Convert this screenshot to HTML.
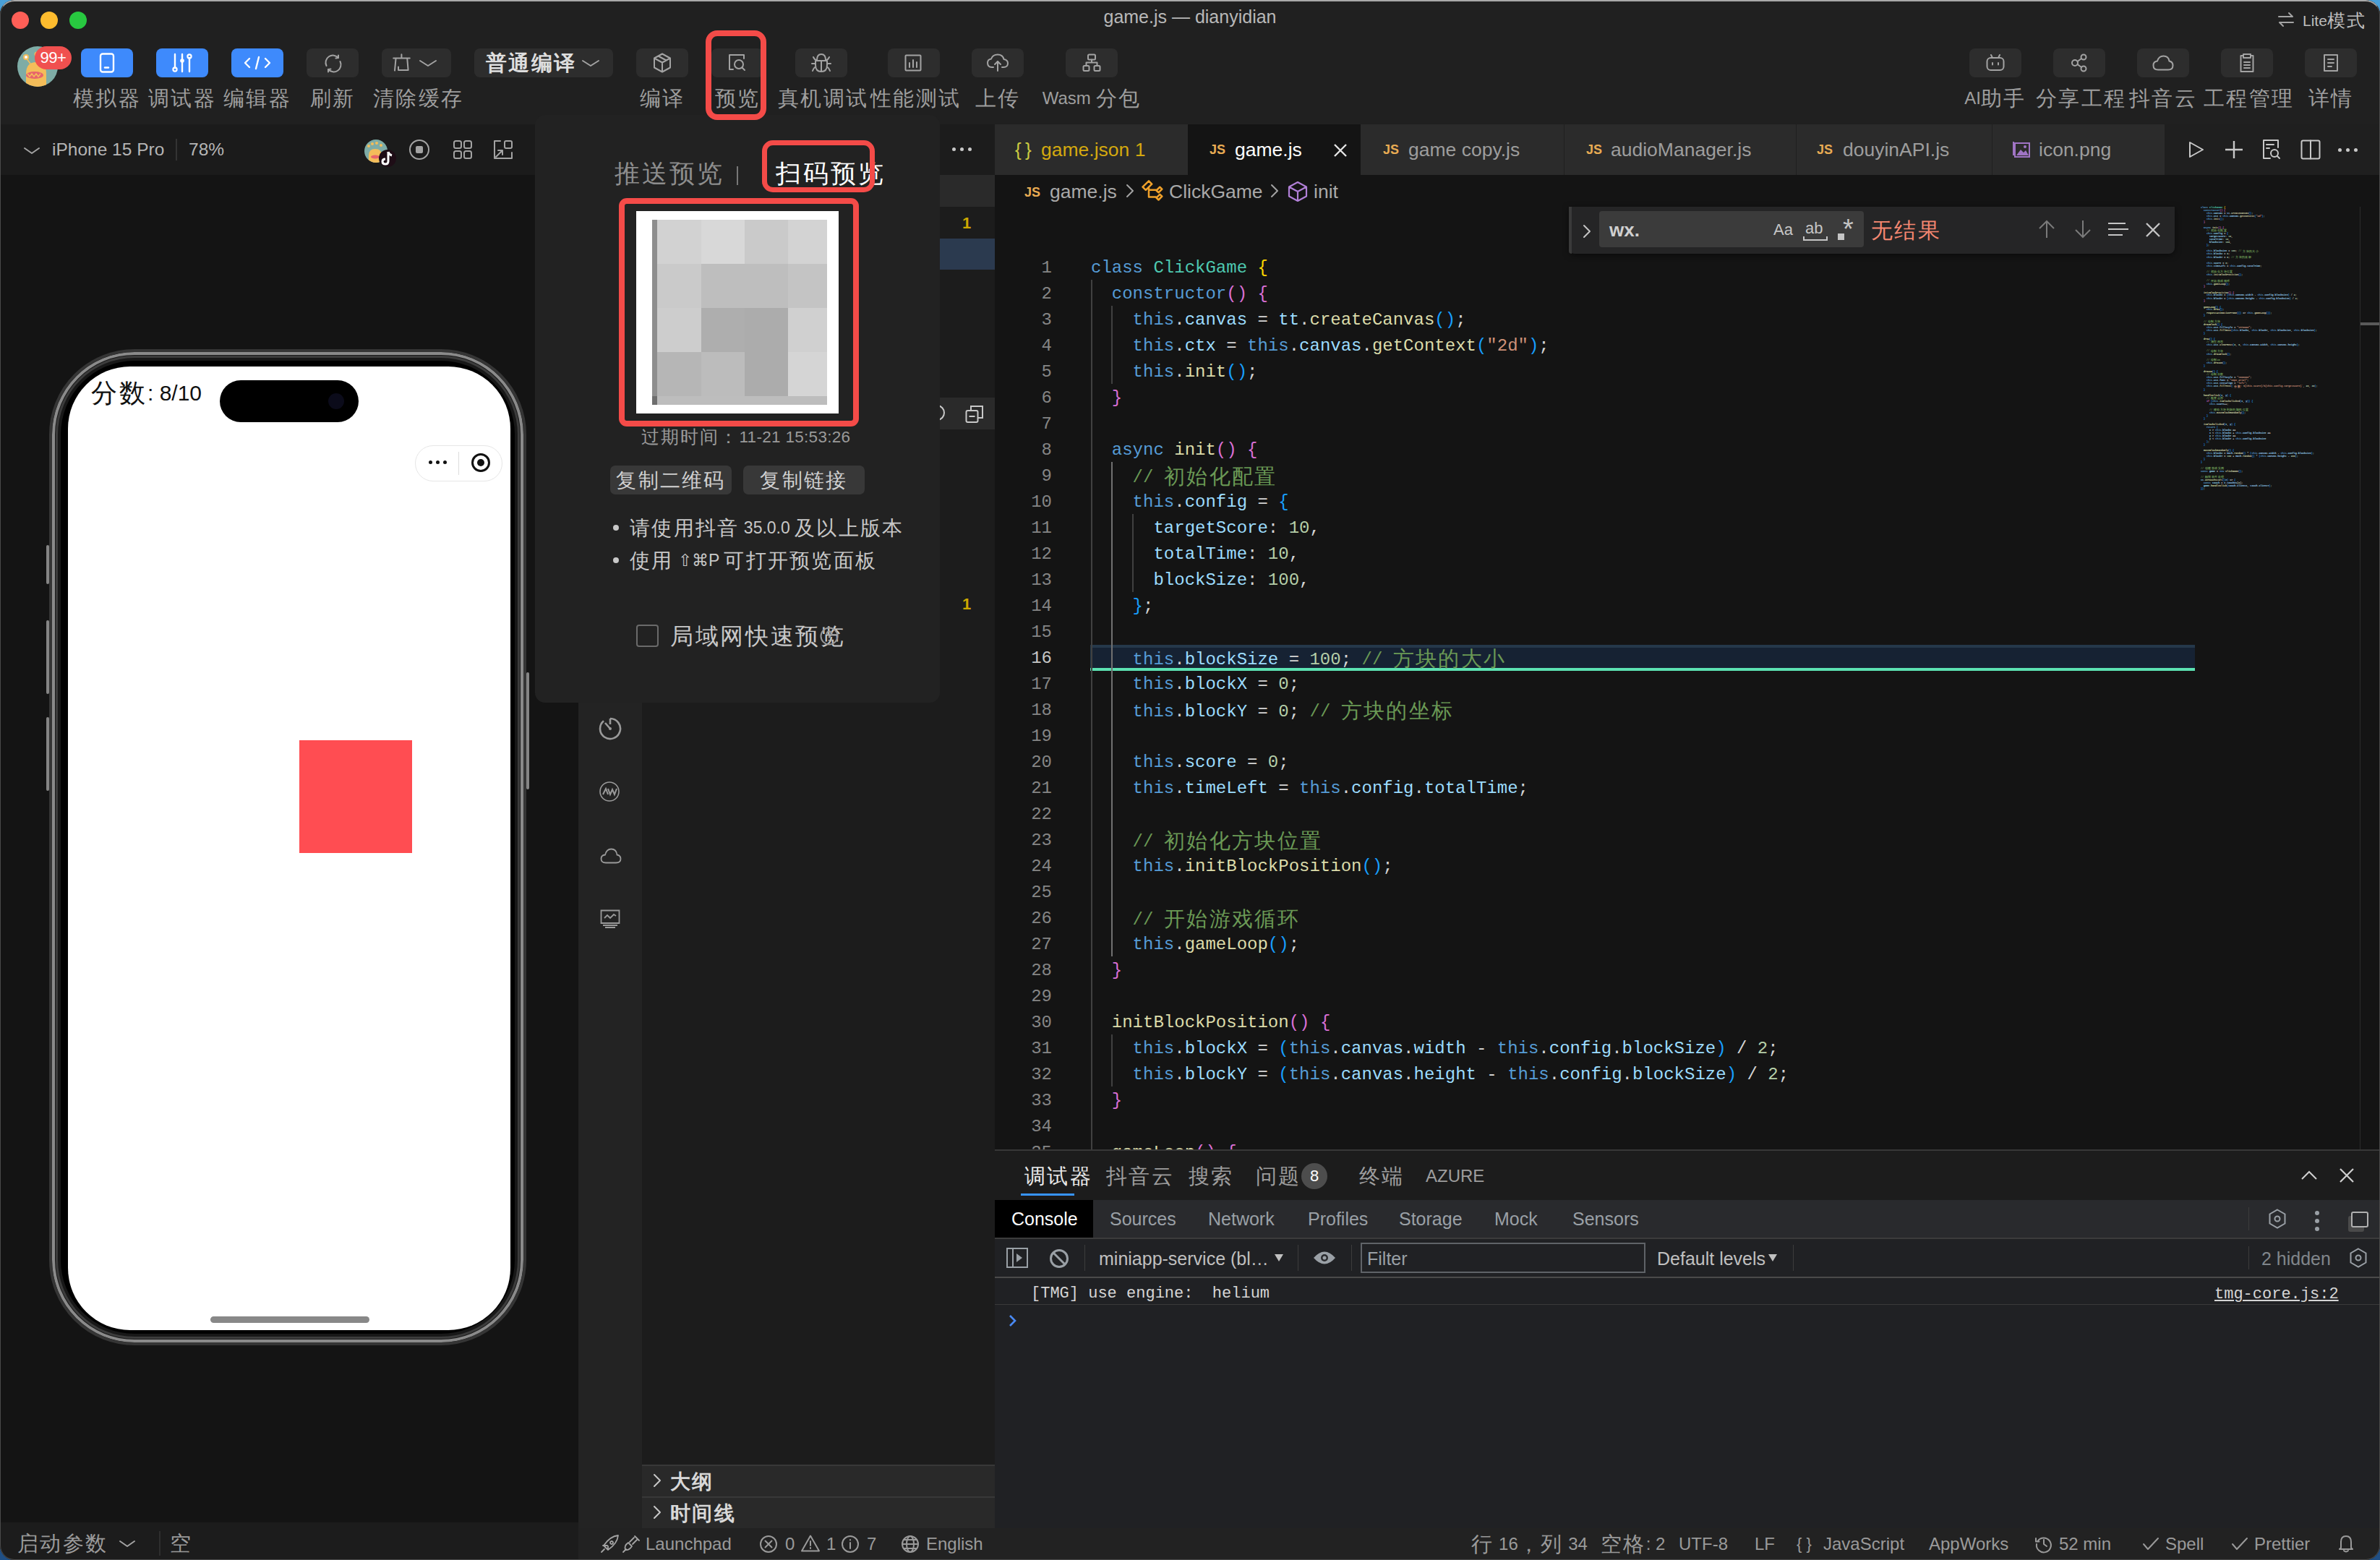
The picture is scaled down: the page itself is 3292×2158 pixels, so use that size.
<!DOCTYPE html>
<html><head><meta charset="utf-8">
<style>
*{margin:0;padding:0;box-sizing:border-box}
html,body{width:3292px;height:2158px;overflow:hidden;background:linear-gradient(#4aa0d8,#1f4f85);font-family:"Liberation Sans",sans-serif;color:#a8a8a8}
.a{position:absolute}
.mono{font-family:"Liberation Mono",monospace}
svg{position:absolute;overflow:visible}
/* toolbar */
.tb{position:absolute;top:67px;height:40px;border-radius:8px;background:#2d2d2d}
.tb.blue{background:#3e8afc}
.lbl{position:absolute;top:121px;font-size:24px;line-height:30px;color:#9e9e9e;text-align:center;white-space:nowrap}
.ic{stroke:#a3a3a3;stroke-width:2;fill:none;stroke-linecap:round;stroke-linejoin:round}
.icw{stroke:#fff;stroke-width:2.4;fill:none;stroke-linecap:round;stroke-linejoin:round}
/* code */
.code{position:absolute;left:1376px;top:351px;width:1660px;height:1240px;overflow:hidden}
.ln{position:absolute;left:0;width:79px;text-align:right;font-family:"Liberation Mono",monospace;font-size:24px;line-height:36px;color:#858585}
.cl{position:absolute;left:133px;font-family:"Liberation Mono",monospace;font-size:24px;line-height:36px;color:#d4d4d4;white-space:pre}
.k{color:#569cd6}.t{color:#4ec9b0}.y{color:#ffd700}.m{color:#da70d6}.b{color:#179fff}.v{color:#9cdcfe}.f{color:#dcdcaa}.s{color:#ce9178}.c{color:#6a9955}.n{color:#b5cea8}.w{color:#d4d4d4}
.guide{position:absolute;width:2px;background:#404040}
.z{font-size:1.2em;letter-spacing:.083em;vertical-align:-.06em;font-family:"Liberation Sans",sans-serif}
</style></head><body>
<div id="win" class="a" style="left:0;top:0;width:3292px;height:2158px;border-radius:20px;overflow:hidden;background:#202020">

<!-- ===== window chrome / toolbar ===== -->
<div class="a" style="left:0;top:0;width:3292px;height:172px;background:#202020"></div>
<div class="a" style="left:16px;top:16px;width:24px;height:24px;border-radius:50%;background:#fe5f57"></div>
<div class="a" style="left:56px;top:16px;width:24px;height:24px;border-radius:50%;background:#febc2e"></div>
<div class="a" style="left:96px;top:16px;width:24px;height:24px;border-radius:50%;background:#28c840"></div>
<div class="a" style="left:0;top:8px;width:3292px;text-align:center;font-size:25px;line-height:30px;color:#b8b8b8">game.js — dianyidian</div>

<!-- avatar -->
<svg style="left:24px;top:64px" width="56" height="56" viewBox="0 0 56 56">
<defs><clipPath id="av"><circle cx="28" cy="28" r="28"/></clipPath></defs>
<g clip-path="url(#av)"><rect width="56" height="56" fill="#7eaca6"/>
<path d="M12 56 L12 38 Q12 22 26 22 Q40 22 40 38 L40 56 Z" fill="#f4bd5a"/>
<ellipse cx="24" cy="40" rx="12" ry="5" fill="#e8656b"/>
<path d="M14 38 L17 42 L20 38 L23 42 L26 38 L29 42 L32 38" stroke="#f4bd5a" stroke-width="1.5" fill="none"/>
<line x1="18" y1="24" x2="12" y2="16" stroke="#f4bd5a" stroke-width="1.5"/><circle cx="12" cy="15" r="4" fill="#f4bd5a"/><circle cx="12" cy="15" r="2" fill="#fff"/>
<line x1="26" y1="22" x2="27" y2="12" stroke="#f4bd5a" stroke-width="1.5"/><circle cx="27" cy="11" r="3.5" fill="#f4bd5a"/><circle cx="27" cy="11" r="1.8" fill="#fff"/>
</g></svg>
<div class="a" style="left:48px;top:64px;width:51px;height:32px;border-radius:16px;background:#f0504f;color:#fff;font-size:22px;line-height:32px;text-align:center;letter-spacing:-0.5px">99+</div>

<div class="tb blue" style="left:112px;width:72px"></div>
<svg style="left:136px;top:73px" width="24" height="28" viewBox="0 0 24 28"><rect class="icw" x="3" y="1.5" width="18" height="25" rx="3"/><line class="icw" x1="9" y1="20.5" x2="14" y2="20.5"/></svg>
<div class="lbl" style="left:100px;width:96px"><span class="z">模拟器</span></div>

<div class="tb blue" style="left:216px;width:72px"></div>
<svg style="left:237px;top:74px" width="30" height="26" viewBox="0 0 30 26"><line class="icw" x1="5" y1="1" x2="5" y2="20"/><circle cx="5" cy="22" r="2.6" fill="none" stroke="#fff" stroke-width="2.2"/><line class="icw" x1="15" y1="1" x2="15" y2="25"/><circle cx="15" cy="10" r="2.8" fill="#fff"/><line class="icw" x1="25" y1="6" x2="25" y2="25"/><circle cx="25" cy="4" r="2.6" fill="none" stroke="#fff" stroke-width="2.2"/></svg>
<div class="lbl" style="left:204px;width:96px"><span class="z">调试器</span></div>

<div class="tb blue" style="left:320px;width:72px"></div>
<svg style="left:338px;top:78px" width="36" height="18" viewBox="0 0 36 18"><polyline class="icw" points="7,3 1,9 7,15"/><line class="icw" x1="20" y1="1" x2="16" y2="17"/><polyline class="icw" points="29,3 35,9 29,15"/></svg>
<div class="lbl" style="left:308px;width:96px"><span class="z">编辑器</span></div>

<div class="tb" style="left:424px;width:72px"></div>
<svg style="left:447px;top:74px" width="28" height="28" viewBox="0 0 28 28"><path class="ic" d="M4.5 17 A10 10 0 0 1 21 6"/><path class="ic" d="M23.5 11 A10 10 0 0 1 7 22"/><polyline class="ic" points="21,2.5 21,6 17.5,6.5"/><polyline class="ic" points="7,25.5 7,22 10.5,21.5"/></svg>
<div class="lbl" style="left:412px;width:96px"><span class="z">刷新</span></div>

<div class="tb" style="left:528px;width:96px"></div>
<svg style="left:543px;top:74px" width="26" height="26" viewBox="0 0 26 26"><path class="ic" d="M12.4 1.3 V6.4 M1.2 6.4 H23.8 M4.6 6.4 L3 23.6 M20.2 6.4 L21.6 23 H8 V18.4"/></svg>
<svg style="left:580px;top:82px" width="24" height="12" viewBox="0 0 24 12"><polyline class="ic" points="1,2 12,9 23,2"/></svg>
<div class="lbl" style="left:516px;width:120px"><span class="z">清除缓存</span></div>

<div class="tb" style="left:656px;width:192px"></div>
<div class="a" style="left:672px;top:72px;font-size:24px;line-height:30px;color:#dedede;font-weight:bold"><span class="z">普通编译</span></div>
<svg style="left:805px;top:82px" width="24" height="12" viewBox="0 0 24 12"><polyline class="ic" points="1,2 12,9 23,2"/></svg>

<div class="tb" style="left:880px;width:72px"></div>
<svg style="left:903px;top:73px" width="26" height="28" viewBox="0 0 26 28"><path class="ic" d="M13 1.5 L24 7.5 V20.5 L13 26.5 L2 20.5 V7.5 Z M2 7.5 L13 13.5 L24 7.5 M13 13.5 V26.5 M7.5 4.5 L18.5 10.5"/></svg>
<div class="lbl" style="left:868px;width:96px"><span class="z">编译</span></div>

<div class="tb" style="left:984px;width:72px"></div>
<svg style="left:1007px;top:74px" width="26" height="26" viewBox="0 0 26 26"><path class="ic" d="M7 22 H2 V2 H22 V7"/><circle class="ic" cx="15" cy="15" r="6"/><line class="ic" x1="19.5" y1="19.5" x2="23" y2="23"/></svg>
<div class="lbl" style="left:972px;width:96px"><span class="z">预览</span></div>
<div class="a" style="left:976px;top:42px;width:84px;height:124px;border:8px solid #f44b48;border-radius:16px;z-index:10"></div>

<div class="tb" style="left:1100px;width:72px"></div>
<svg style="left:1122px;top:73px" width="28" height="28" viewBox="0 0 28 28"><path class="ic" d="M8 10 Q8 2 14 2 Q20 2 20 10 M6 11 H22 V17 Q22 26 14 26 Q6 26 6 17 Z M14 12 V26 M1 15 H6 M22 15 H27 M2 25 Q4 20 6 20 M26 25 Q24 20 22 20 M3 6 Q5 10 7 10 M25 6 Q23 10 21 10"/></svg>
<div class="lbl" style="left:1076px;width:120px"><span class="z">真机调试</span></div>

<div class="tb" style="left:1228px;width:72px"></div>
<svg style="left:1251px;top:75px" width="24" height="24" viewBox="0 0 24 24"><rect class="ic" x="1.5" y="1.5" width="21" height="21" rx="1"/><line class="ic" x1="7" y1="12" x2="7" y2="18"/><line class="ic" x1="12" y1="8" x2="12" y2="18"/><line class="ic" x1="17" y1="11" x2="17" y2="18"/></svg>
<div class="lbl" style="left:1204px;width:120px"><span class="z">性能测试</span></div>

<div class="tb" style="left:1344px;width:72px"></div>
<svg style="left:1365px;top:74px" width="30" height="26" viewBox="0 0 30 26"><path class="ic" d="M9 19 H7 Q1 19 1 13 Q1 8 6 7.5 Q8 1.5 15 1.5 Q22 1.5 23.5 8 Q29 9 29 13.5 Q29 19 23 19 H21"/><polyline class="ic" points="11,15 15,11 19,15"/><line class="ic" x1="15" y1="11" x2="15" y2="24"/></svg>
<div class="lbl" style="left:1332px;width:96px"><span class="z">上传</span></div>

<div class="tb" style="left:1474px;width:72px"></div>
<svg style="left:1497px;top:74px" width="26" height="26" viewBox="0 0 26 26"><rect class="ic" x="8" y="1.5" width="10" height="7" rx="1.5"/><rect class="ic" x="1.5" y="17" width="8" height="7" rx="1.5"/><rect class="ic" x="16.5" y="17" width="8" height="7" rx="1.5"/><path class="ic" d="M13 8.5 V12.5 M5.5 17 V12.5 H20.5 V17"/></svg>
<div class="lbl" style="left:1440px;width:140px">Wasm <span class="z">分包</span></div>

<!-- right toolbar -->
<div class="a" style="left:3150px;top:14px;width:110px;height:28px">
<svg style="left:0;top:2px" width="24" height="22" viewBox="0 0 24 22"><path class="ic" d="M2 7 H21 L16 2 M22 15 H3 L8 20"/></svg>
<div class="a" style="left:35px;top:0;font-size:21px;line-height:28px;color:#bdbdbd;white-space:nowrap">Lite<span class="z">模式</span></div>
</div>

<div class="tb" style="left:2724px;width:72px"></div>
<svg style="left:2747px;top:74px" width="26" height="26" viewBox="0 0 26 26"><rect class="ic" x="1.5" y="6" width="23" height="17" rx="5"/><path class="ic" d="M7 2 L9 6 M19 2 L17 6 M9 13 V15.5 M17 13 V15.5"/></svg>
<div class="lbl" style="left:2700px;width:120px">AI<span class="z">助手</span></div>

<div class="tb" style="left:2840px;width:72px"></div>
<svg style="left:2864px;top:74px" width="24" height="26" viewBox="0 0 24 26"><circle class="ic" cx="6" cy="13" r="4"/><circle class="ic" cx="18" cy="5" r="3.5"/><circle class="ic" cx="18" cy="21" r="3.5"/><path class="ic" d="M9.5 11 L15 7 M9.5 15 L15 19"/></svg>
<div class="lbl" style="left:2816px;width:120px"><span class="z">分享工程</span></div>

<div class="tb" style="left:2956px;width:72px"></div>
<svg style="left:2977px;top:76px" width="30" height="22" viewBox="0 0 30 22"><path class="ic" d="M8 20.5 Q1.5 20.5 1.5 14.5 Q1.5 9 7 8.5 Q9 1.5 15.5 1.5 Q22.5 1.5 23.5 8.5 Q28.5 9.5 28.5 14.5 Q28.5 20.5 22 20.5 Z"/></svg>
<div class="lbl" style="left:2932px;width:120px"><span class="z">抖音云</span></div>

<div class="tb" style="left:3072px;width:72px"></div>
<svg style="left:3097px;top:73px" width="22" height="28" viewBox="0 0 22 28"><path class="ic" d="M6 4 H2.5 V26 H19.5 V4 H16 M6 2 H16 V7 H6 Z M7 13 H15 M7 17 H15 M7 21 H15"/></svg>
<div class="lbl" style="left:3048px;width:120px"><span class="z">工程管理</span></div>

<div class="tb" style="left:3188px;width:72px"></div>
<svg style="left:3213px;top:74px" width="22" height="26" viewBox="0 0 22 26"><path class="ic" d="M2 2 H20 V24 H2 Z M7 8 H15 M7 13 H15 M7 18 H12"/></svg>
<div class="lbl" style="left:3164px;width:120px"><span class="z">详情</span></div>


<!-- ===== simulator left ===== -->
<div class="a" style="left:0;top:172px;width:800px;height:70px;background:#1b1b1b"></div>
<div class="a" style="left:0;top:242px;width:800px;height:1864px;background:#141414"></div>
<div class="a" style="left:0;top:2106px;width:800px;height:52px;background:#1c1c1c"></div>
<!-- sim toolbar -->
<svg style="left:32px;top:202px" width="24" height="14" viewBox="0 0 24 14"><polyline class="ic" points="2,3 12,10 22,3"/></svg>
<div class="a" style="left:72px;top:190px;font-size:24.5px;line-height:34px;color:#b5b5b5;white-space:nowrap">iPhone 15 Pro</div>
<div class="a" style="left:243px;top:192px;width:2px;height:30px;background:#333"></div>
<div class="a" style="left:261px;top:190px;font-size:24.5px;line-height:34px;color:#b5b5b5">78%</div>
<svg style="left:504px;top:193px" width="44" height="40" viewBox="0 0 44 40">
<defs><clipPath id="av2"><circle cx="16" cy="16" r="16"/></clipPath></defs>
<g clip-path="url(#av2)"><rect width="32" height="32" fill="#7eaca6"/><path d="M6 32 V22 Q6 13 15 13 Q24 13 24 22 V32Z" fill="#f4bd5a"/><ellipse cx="15" cy="24" rx="6" ry="2.5" fill="#e8656b"/><circle cx="6" cy="9" r="2" fill="#f4bd5a"/><circle cx="11" cy="6" r="2" fill="#f4bd5a"/><circle cx="17" cy="5" r="2" fill="#f4bd5a"/><circle cx="23" cy="8" r="2" fill="#f4bd5a"/></g>
<circle cx="32" cy="26" r="12" fill="#1e0d16"/>
<path d="M33 17 V30 Q33 34 29 34 Q25 34 25 30.5 Q25 27 29 27" stroke="#fff" stroke-width="3" fill="none"/><path d="M33 17 Q34 21 38 22" stroke="#fff" stroke-width="3" fill="none"/>
</svg>
<svg style="left:566px;top:193px" width="28" height="28" viewBox="0 0 28 28"><circle class="ic" cx="14" cy="14" r="13"/><rect x="9" y="9" width="10" height="10" rx="2" fill="#a3a3a3"/></svg>
<svg style="left:627px;top:194px" width="26" height="26" viewBox="0 0 26 26"><rect class="ic" x="1" y="1" width="10" height="10" rx="2.5"/><rect class="ic" x="15" y="1" width="10" height="10" rx="2.5"/><rect class="ic" x="1" y="15" width="10" height="10" rx="2.5"/><rect class="ic" x="15" y="15" width="10" height="10" rx="2.5"/></svg>
<svg style="left:683px;top:194px" width="26" height="26" viewBox="0 0 26 26"><path class="ic" d="M9 1 H1 V25 H25 V17"/><rect class="ic" x="15" y="1" width="10" height="10" rx="2"/><path class="ic" d="M3 23 L12 14 M6 14 H12 V20"/></svg>

<!-- phone -->
<div class="a" style="left:62px;top:480px;width:672px;height:386px;"></div>
<div class="a" style="left:68px;top:483px;width:660px;height:1378px;border-radius:118px;background:#000;border:4px solid #353535;box-shadow:inset 0 0 0 4px #8a8a8a,inset 0 0 0 5px #1a1a1a,inset 0 0 0 8px #3c3c3c,inset 0 0 0 12px #181818"></div>
<div class="a" style="left:94px;top:507px;width:612px;height:1333px;border-radius:86px;background:#fff"></div>
<div class="a" style="left:304px;top:526px;width:192px;height:58px;border-radius:29px;background:#000"></div>
<div class="a" style="left:454px;top:544px;width:22px;height:22px;border-radius:50%;background:#0b0b1a"></div>
<div class="a" style="left:126px;top:526px;font-size:30px;line-height:36px;color:#111;white-space:nowrap"><span class="z">分数</span>: 8/10</div>
<div class="a" style="left:574px;top:616px;width:121px;height:50px;border-radius:25px;border:1px solid #e6e6e6;background:#fff"></div>
<div class="a" style="left:634px;top:625px;width:1px;height:32px;background:#ddd"></div>
<div class="a" style="left:593px;top:637px;width:5px;height:5px;border-radius:50%;background:#111"></div>
<div class="a" style="left:603px;top:637px;width:5px;height:5px;border-radius:50%;background:#111"></div>
<div class="a" style="left:613px;top:637px;width:5px;height:5px;border-radius:50%;background:#111"></div>
<div class="a" style="left:652px;top:627px;width:26px;height:26px;border-radius:50%;border:3px solid #111"></div>
<div class="a" style="left:660px;top:635px;width:10px;height:10px;border-radius:50%;background:#111"></div>
<div class="a" style="left:414px;top:1024px;width:156px;height:156px;background:#ff4d52"></div>
<div class="a" style="left:291px;top:1821px;width:220px;height:9px;border-radius:5px;background:#888"></div>
<!-- side buttons -->
<div class="a" style="left:64px;top:754px;width:4px;height:54px;border-radius:2px;background:#858585"></div>
<div class="a" style="left:64px;top:858px;width:4px;height:102px;border-radius:2px;background:#858585"></div>
<div class="a" style="left:64px;top:992px;width:4px;height:102px;border-radius:2px;background:#858585"></div>
<div class="a" style="left:728px;top:930px;width:4px;height:162px;border-radius:2px;background:#858585"></div>

<!-- bottom bar -->
<div class="a" style="left:24px;top:2118px;font-size:24px;line-height:34px;color:#9a9a9a"><span class="z">启动参数</span></div>
<svg style="left:165px;top:2130px" width="22" height="12" viewBox="0 0 22 12"><polyline class="ic" points="1,2 11,9 21,2"/></svg>
<div class="a" style="left:220px;top:2118px;width:2px;height:34px;background:#2e2e2e"></div>
<div class="a" style="left:235px;top:2118px;font-size:24px;line-height:34px;color:#9a9a9a"><span class="z">空</span></div>


<!-- ===== activity bar + sidebar ===== -->
<div class="a" style="left:800px;top:172px;width:88px;height:1942px;background:#232323"></div>
<div class="a" style="left:888px;top:172px;width:488px;height:1942px;background:#1c1c1c"></div>
<div class="a" style="left:1317px;top:204px;width:5px;height:5px;border-radius:50%;background:#c8c8c8"></div>
<div class="a" style="left:1328px;top:204px;width:5px;height:5px;border-radius:50%;background:#c8c8c8"></div>
<div class="a" style="left:1339px;top:204px;width:5px;height:5px;border-radius:50%;background:#c8c8c8"></div>
<div class="a" style="left:888px;top:242px;width:488px;height:44px;background:#2a2a2a"></div>
<div class="a" style="left:1331px;top:294px;font-size:22px;line-height:30px;color:#cca700;font-weight:bold">1</div>
<div class="a" style="left:888px;top:330px;width:488px;height:43px;background:#2b3a4f"></div>
<div class="a" style="left:888px;top:550px;width:488px;height:44px;background:#2a2a2a"></div>
<svg style="left:1286px;top:558px" width="24" height="26" viewBox="0 0 24 26"><path d="M4 5 A10 10 0 1 1 4 21" fill="none" stroke="#c8c8c8" stroke-width="2"/></svg>
<svg style="left:1335px;top:560px" width="26" height="26" viewBox="0 0 26 26"><rect x="1.5" y="8" width="16" height="16" rx="2" fill="#2a2a2a" stroke="#c8c8c8" stroke-width="2"/><path d="M8 8 V2 H24 V18 H17.5" fill="none" stroke="#c8c8c8" stroke-width="2"/><line x1="5.5" y1="16" x2="13.5" y2="16" stroke="#c8c8c8" stroke-width="2"/></svg>
<div class="a" style="left:1331px;top:821px;font-size:22px;line-height:30px;color:#cca700;font-weight:bold">1</div>
<!-- activity icons -->
<svg style="left:828px;top:992px" width="32" height="32" viewBox="0 0 32 32"><path d="M16 2 A14 14 0 1 1 7 5.3" fill="none" stroke="#9a9a9a" stroke-width="2.6"/><path d="M16 2 V10" stroke="#9a9a9a" stroke-width="2.6"/><path d="M9 8 L16 16" stroke="#9a9a9a" stroke-width="2.6"/><circle cx="16" cy="16" r="2" fill="#9a9a9a"/></svg>
<svg style="left:829px;top:1081px" width="28" height="28" viewBox="0 0 28 28"><circle cx="14" cy="14" r="13" fill="none" stroke="#9a9a9a" stroke-width="1.6"/><path d="M5 18 L9 10 L12 18 M12 10 L15 18 L18 11 L21 18 L24 10" fill="none" stroke="#9a9a9a" stroke-width="2"/></svg>
<svg style="left:830px;top:1173px" width="30" height="22" viewBox="0 0 30 22"><path d="M8 20.5 Q1.5 20.5 1.5 15 Q1.5 10 7 9.5 Q9 1.5 15.5 1.5 Q22.5 1.5 23.5 9.5 Q28.5 10.5 28.5 15 Q28.5 20.5 22 20.5 Z" fill="none" stroke="#9a9a9a" stroke-width="1.8"/></svg>
<svg style="left:830px;top:1258px" width="28" height="26" viewBox="0 0 28 26"><path d="M1.5 1.5 H26.5 V19 H1.5 Z M1.5 1.5 H26.5" fill="none" stroke="#9a9a9a" stroke-width="1.8"/><polyline points="6,12 10,8 14,12 19,7 22,9" fill="none" stroke="#9a9a9a" stroke-width="1.8"/><path d="M4 22 H24 M7 25 H21" stroke="#9a9a9a" stroke-width="1.8"/></svg>


<!-- ===== editor ===== -->
<div class="a" style="left:1376px;top:172px;width:1916px;height:70px;background:#1f1f1f"></div>
<div class="a" style="left:1376px;top:242px;width:1916px;height:1349px;background:#141414"></div>
<div class="a" style="left:0;top:0;width:3292px;height:1590px;overflow:hidden">
<!-- tabs -->
<div class="a" style="left:1376px;top:172px;width:267px;height:70px;background:#2b2b2b"></div>
<div class="a" style="left:1643px;top:172px;width:239px;height:70px;background:#141414"></div>
<div class="a" style="left:1882px;top:172px;width:281px;height:70px;background:#2b2b2b"></div>
<div class="a" style="left:2164px;top:172px;width:320px;height:70px;background:#2b2b2b"></div>
<div class="a" style="left:2485px;top:172px;width:270px;height:70px;background:#2b2b2b"></div>
<div class="a" style="left:2756px;top:172px;width:238px;height:70px;background:#2b2b2b"></div>
<div class="a" style="left:1404px;top:189px;font-size:26px;line-height:36px;color:#cbcb41">{&thinsp;}</div>
<div class="a" style="left:1440px;top:189px;font-size:26.5px;line-height:36px;color:#d4a90f;white-space:nowrap">game.json 1</div>
<div class="a" style="left:1673px;top:192px;font-size:18px;line-height:30px;color:#e8ab53;font-weight:bold">JS</div>
<div class="a" style="left:1708px;top:189px;font-size:26.5px;line-height:36px;color:#ffffff;white-space:nowrap">game.js</div>
<svg style="left:1845px;top:199px" width="18" height="18" viewBox="0 0 18 18"><path d="M1 1 L17 17 M17 1 L1 17" stroke="#e6e6e6" stroke-width="2.4"/></svg>
<div class="a" style="left:1913px;top:192px;font-size:18px;line-height:30px;color:#e8ab53;font-weight:bold">JS</div>
<div class="a" style="left:1948px;top:189px;font-size:26.5px;line-height:36px;color:#9d9d9d;white-space:nowrap">game copy.js</div>
<div class="a" style="left:2194px;top:192px;font-size:18px;line-height:30px;color:#e8ab53;font-weight:bold">JS</div>
<div class="a" style="left:2228px;top:189px;font-size:26.5px;line-height:36px;color:#9d9d9d;white-space:nowrap">audioManager.js</div>
<div class="a" style="left:2513px;top:192px;font-size:18px;line-height:30px;color:#e8ab53;font-weight:bold">JS</div>
<div class="a" style="left:2549px;top:189px;font-size:26.5px;line-height:36px;color:#9d9d9d;white-space:nowrap">douyinAPI.js</div>
<svg style="left:2784px;top:195px" width="24" height="24" viewBox="0 0 24 24"><rect x="3" y="3" width="20" height="19" fill="none" stroke="#a074c4" stroke-width="2"/><path d="M1 1 V20" stroke="#a074c4" stroke-width="2"/><path d="M5 20 L11 12 L15 16 L18 13 L22 20 Z" fill="#a074c4"/><circle cx="17" cy="8" r="2" fill="#a074c4"/></svg>
<div class="a" style="left:2820px;top:189px;font-size:26.5px;line-height:36px;color:#9d9d9d;white-space:nowrap">icon.png</div>
<!-- tab actions -->
<svg style="left:3027px;top:195px" width="22" height="24" viewBox="0 0 22 24"><path class="ic" d="M2 2 L20 12 L2 22 Z" style="stroke:#c8c8c8"/></svg>
<svg style="left:3077px;top:194px" width="26" height="26" viewBox="0 0 26 26"><path d="M13 1 V25 M1 13 H25" stroke="#c8c8c8" stroke-width="2.4"/></svg>
<svg style="left:3129px;top:192px" width="26" height="30" viewBox="0 0 26 30"><path class="ic" style="stroke:#c8c8c8" d="M11 27 H2 V2 H22 V12 M6 8 H16 M6 13 H10"/><circle class="ic" style="stroke:#c8c8c8" cx="17" cy="20" r="5"/><line class="ic" style="stroke:#c8c8c8" x1="21" y1="24" x2="24" y2="27"/></svg>
<svg style="left:3182px;top:193px" width="28" height="28" viewBox="0 0 28 28"><rect class="ic" style="stroke:#c8c8c8" x="1.5" y="1.5" width="25" height="25" rx="2"/><line class="ic" style="stroke:#c8c8c8" x1="14" y1="1.5" x2="14" y2="26.5"/></svg>
<div class="a" style="left:3234px;top:205px;width:5px;height:5px;border-radius:50%;background:#c8c8c8"></div>
<div class="a" style="left:3245px;top:205px;width:5px;height:5px;border-radius:50%;background:#c8c8c8"></div>
<div class="a" style="left:3256px;top:205px;width:5px;height:5px;border-radius:50%;background:#c8c8c8"></div>

<!-- breadcrumbs -->
<div class="a" style="left:1417px;top:251px;font-size:18px;line-height:30px;color:#e8ab53;font-weight:bold">JS</div>
<div class="a" style="left:1452px;top:247px;font-size:26.5px;line-height:36px;color:#a9a9a9;white-space:nowrap">game.js</div>
<svg style="left:1557px;top:254px" width="12" height="20" viewBox="0 0 12 20"><polyline class="ic" points="2,2 10,10 2,18"/></svg>
<svg style="left:1570px;top:245px" width="50" height="40" viewBox="0 0 50 40"><path d="M10.5 13.6 L19 5.4 L23.2 9.7 L14.8 17.8 Z M19 14.5 V27.5 H29.5 M19 17.7 H29.5 M29.5 18.5 L34.3 13.7 L37.3 16.6 L32.5 21.4 Z M29.5 28.6 L34.3 23.8 L37.3 26.7 L32.5 31.5 Z" stroke="#f0a12a" stroke-width="2.5" fill="none" stroke-linejoin="round"/></svg>
<div class="a" style="left:1617px;top:247px;font-size:26.5px;line-height:36px;color:#a9a9a9;white-space:nowrap">ClickGame</div>
<svg style="left:1757px;top:254px" width="12" height="20" viewBox="0 0 12 20"><polyline class="ic" points="2,2 10,10 2,18"/></svg>
<svg style="left:1781px;top:250px" width="28" height="30" viewBox="0 0 28 30"><path d="M14 2 L26 8.5 V21.5 L14 28 L2 21.5 V8.5 Z M2 8.5 L14 15 L26 8.5 M14 15 V28" stroke="#b180d7" stroke-width="2.2" fill="none" stroke-linejoin="round"/></svg>
<div class="a" style="left:1817px;top:247px;font-size:26.5px;line-height:36px;color:#a9a9a9;white-space:nowrap">init</div>

<!-- current line highlight -->
<div class="a" style="left:1508px;top:892px;width:1528px;height:36px;background:#162233;border-top:4px solid #25384a;border-left:2px solid #25384a"></div>
<div class="a" style="left:1508px;top:924px;width:1528px;height:4px;background:#5ce2b2"></div>
<!-- indent guides -->
<div class="guide" style="left:1509px;top:387px;height:1204px"></div>
<div class="guide" style="left:1537px;top:423px;height:108px"></div>
<div class="guide" style="left:1537px;top:639px;height:684px;background:#707070"></div>
<div class="guide" style="left:1566px;top:711px;height:108px"></div>
<div class="guide" style="left:1537px;top:1431px;height:72px"></div>
<div class="ln" style="top:353px;left:1376px;color:#858585">1</div>
<div class="cl" style="top:353px;left:1509px"><span class="k">class</span><span class="w"> </span><span class="t">ClickGame</span><span class="w"> </span><span class="y">{</span></div>
<div class="ln" style="top:389px;left:1376px;color:#858585">2</div>
<div class="cl" style="top:389px;left:1509px"><span class="w">  </span><span class="k">constructor</span><span class="m">()</span><span class="w"> </span><span class="m">{</span></div>
<div class="ln" style="top:425px;left:1376px;color:#858585">3</div>
<div class="cl" style="top:425px;left:1509px"><span class="w">    </span><span class="k">this</span><span class="w">.</span><span class="v">canvas</span><span class="w"> = </span><span class="v">tt</span><span class="w">.</span><span class="f">createCanvas</span><span class="b">()</span><span class="w">;</span></div>
<div class="ln" style="top:461px;left:1376px;color:#858585">4</div>
<div class="cl" style="top:461px;left:1509px"><span class="w">    </span><span class="k">this</span><span class="w">.</span><span class="v">ctx</span><span class="w"> = </span><span class="k">this</span><span class="w">.</span><span class="v">canvas</span><span class="w">.</span><span class="f">getContext</span><span class="b">(</span><span class="s">&quot;2d&quot;</span><span class="b">)</span><span class="w">;</span></div>
<div class="ln" style="top:497px;left:1376px;color:#858585">5</div>
<div class="cl" style="top:497px;left:1509px"><span class="w">    </span><span class="k">this</span><span class="w">.</span><span class="f">init</span><span class="b">()</span><span class="w">;</span></div>
<div class="ln" style="top:533px;left:1376px;color:#858585">6</div>
<div class="cl" style="top:533px;left:1509px"><span class="w">  </span><span class="m">}</span></div>
<div class="ln" style="top:569px;left:1376px;color:#858585">7</div>
<div class="ln" style="top:605px;left:1376px;color:#858585">8</div>
<div class="cl" style="top:605px;left:1509px"><span class="w">  </span><span class="k">async</span><span class="w"> </span><span class="f">init</span><span class="m">()</span><span class="w"> </span><span class="m">{</span></div>
<div class="ln" style="top:641px;left:1376px;color:#858585">9</div>
<div class="cl" style="top:641px;left:1509px"><span class="w">    </span><span class="c">// <span class="z">初始化配置</span></span></div>
<div class="ln" style="top:677px;left:1376px;color:#858585">10</div>
<div class="cl" style="top:677px;left:1509px"><span class="w">    </span><span class="k">this</span><span class="w">.</span><span class="v">config</span><span class="w"> = </span><span class="b">{</span></div>
<div class="ln" style="top:713px;left:1376px;color:#858585">11</div>
<div class="cl" style="top:713px;left:1509px"><span class="w">      </span><span class="v">targetScore</span><span class="w">: </span><span class="n">10</span><span class="w">,</span></div>
<div class="ln" style="top:749px;left:1376px;color:#858585">12</div>
<div class="cl" style="top:749px;left:1509px"><span class="w">      </span><span class="v">totalTime</span><span class="w">: </span><span class="n">10</span><span class="w">,</span></div>
<div class="ln" style="top:785px;left:1376px;color:#858585">13</div>
<div class="cl" style="top:785px;left:1509px"><span class="w">      </span><span class="v">blockSize</span><span class="w">: </span><span class="n">100</span><span class="w">,</span></div>
<div class="ln" style="top:821px;left:1376px;color:#858585">14</div>
<div class="cl" style="top:821px;left:1509px"><span class="w">    </span><span class="b">}</span><span class="w">;</span></div>
<div class="ln" style="top:857px;left:1376px;color:#858585">15</div>
<div class="ln" style="top:893px;left:1376px;color:#c6c6c6">16</div>
<div class="cl" style="top:893px;left:1509px"><span class="w">    </span><span class="k">this</span><span class="w">.</span><span class="v">blockSize</span><span class="w"> = </span><span class="n">100</span><span class="w">; </span><span class="c">// <span class="z">方块的大小</span></span></div>
<div class="ln" style="top:929px;left:1376px;color:#858585">17</div>
<div class="cl" style="top:929px;left:1509px"><span class="w">    </span><span class="k">this</span><span class="w">.</span><span class="v">blockX</span><span class="w"> = </span><span class="n">0</span><span class="w">;</span></div>
<div class="ln" style="top:965px;left:1376px;color:#858585">18</div>
<div class="cl" style="top:965px;left:1509px"><span class="w">    </span><span class="k">this</span><span class="w">.</span><span class="v">blockY</span><span class="w"> = </span><span class="n">0</span><span class="w">; </span><span class="c">// <span class="z">方块的坐标</span></span></div>
<div class="ln" style="top:1001px;left:1376px;color:#858585">19</div>
<div class="ln" style="top:1037px;left:1376px;color:#858585">20</div>
<div class="cl" style="top:1037px;left:1509px"><span class="w">    </span><span class="k">this</span><span class="w">.</span><span class="v">score</span><span class="w"> = </span><span class="n">0</span><span class="w">;</span></div>
<div class="ln" style="top:1073px;left:1376px;color:#858585">21</div>
<div class="cl" style="top:1073px;left:1509px"><span class="w">    </span><span class="k">this</span><span class="w">.</span><span class="v">timeLeft</span><span class="w"> = </span><span class="k">this</span><span class="w">.</span><span class="v">config</span><span class="w">.</span><span class="v">totalTime</span><span class="w">;</span></div>
<div class="ln" style="top:1109px;left:1376px;color:#858585">22</div>
<div class="ln" style="top:1145px;left:1376px;color:#858585">23</div>
<div class="cl" style="top:1145px;left:1509px"><span class="w">    </span><span class="c">// <span class="z">初始化方块位置</span></span></div>
<div class="ln" style="top:1181px;left:1376px;color:#858585">24</div>
<div class="cl" style="top:1181px;left:1509px"><span class="w">    </span><span class="k">this</span><span class="w">.</span><span class="f">initBlockPosition</span><span class="b">()</span><span class="w">;</span></div>
<div class="ln" style="top:1217px;left:1376px;color:#858585">25</div>
<div class="ln" style="top:1253px;left:1376px;color:#858585">26</div>
<div class="cl" style="top:1253px;left:1509px"><span class="w">    </span><span class="c">// <span class="z">开始游戏循环</span></span></div>
<div class="ln" style="top:1289px;left:1376px;color:#858585">27</div>
<div class="cl" style="top:1289px;left:1509px"><span class="w">    </span><span class="k">this</span><span class="w">.</span><span class="f">gameLoop</span><span class="b">()</span><span class="w">;</span></div>
<div class="ln" style="top:1325px;left:1376px;color:#858585">28</div>
<div class="cl" style="top:1325px;left:1509px"><span class="w">  </span><span class="m">}</span></div>
<div class="ln" style="top:1361px;left:1376px;color:#858585">29</div>
<div class="ln" style="top:1397px;left:1376px;color:#858585">30</div>
<div class="cl" style="top:1397px;left:1509px"><span class="w">  </span><span class="f">initBlockPosition</span><span class="m">()</span><span class="w"> </span><span class="m">{</span></div>
<div class="ln" style="top:1433px;left:1376px;color:#858585">31</div>
<div class="cl" style="top:1433px;left:1509px"><span class="w">    </span><span class="k">this</span><span class="w">.</span><span class="v">blockX</span><span class="w"> = </span><span class="b">(</span><span class="k">this</span><span class="w">.</span><span class="v">canvas</span><span class="w">.</span><span class="v">width</span><span class="w"> - </span><span class="k">this</span><span class="w">.</span><span class="v">config</span><span class="w">.</span><span class="v">blockSize</span><span class="b">)</span><span class="w"> / </span><span class="n">2</span><span class="w">;</span></div>
<div class="ln" style="top:1469px;left:1376px;color:#858585">32</div>
<div class="cl" style="top:1469px;left:1509px"><span class="w">    </span><span class="k">this</span><span class="w">.</span><span class="v">blockY</span><span class="w"> = </span><span class="b">(</span><span class="k">this</span><span class="w">.</span><span class="v">canvas</span><span class="w">.</span><span class="v">height</span><span class="w"> - </span><span class="k">this</span><span class="w">.</span><span class="v">config</span><span class="w">.</span><span class="v">blockSize</span><span class="b">)</span><span class="w"> / </span><span class="n">2</span><span class="w">;</span></div>
<div class="ln" style="top:1505px;left:1376px;color:#858585">33</div>
<div class="cl" style="top:1505px;left:1509px"><span class="w">  </span><span class="m">}</span></div>
<div class="ln" style="top:1541px;left:1376px;color:#858585">34</div>
<div class="ln" style="top:1577px;left:1376px;color:#858585">35</div>
<div class="cl" style="top:1577px;left:1509px"><span class="w">  </span><span class="f">gameLoop</span><span class="m">()</span><span class="w"> </span><span class="m">{</span></div>
<div class="a mono" style="left:3044px;top:285px;width:1600px;font-size:24px;line-height:28.6px;white-space:pre;color:#d4d4d4;transform-origin:0 0;transform:scale(0.1396,0.14);font-weight:bold"><span class="k">class</span><span class="w"> </span><span class="t">ClickGame</span><span class="w"> </span><span class="y">{</span>
<span class="w">  </span><span class="k">constructor</span><span class="m">()</span><span class="w"> </span><span class="m">{</span>
<span class="w">    </span><span class="k">this</span><span class="w">.</span><span class="v">canvas</span><span class="w"> = </span><span class="v">tt</span><span class="w">.</span><span class="f">createCanvas</span><span class="b">()</span><span class="w">;</span>
<span class="w">    </span><span class="k">this</span><span class="w">.</span><span class="v">ctx</span><span class="w"> = </span><span class="k">this</span><span class="w">.</span><span class="v">canvas</span><span class="w">.</span><span class="f">getContext</span><span class="b">(</span><span class="s">&quot;2d&quot;</span><span class="b">)</span><span class="w">;</span>
<span class="w">    </span><span class="k">this</span><span class="w">.</span><span class="f">init</span><span class="b">()</span><span class="w">;</span>
<span class="w">  </span><span class="m">}</span>

<span class="w">  </span><span class="k">async</span><span class="w"> </span><span class="f">init</span><span class="m">()</span><span class="w"> </span><span class="m">{</span>
<span class="w">    </span><span class="c">// <span class="z">初始化配置</span></span>
<span class="w">    </span><span class="k">this</span><span class="w">.</span><span class="v">config</span><span class="w"> = </span><span class="b">{</span>
<span class="w">      </span><span class="v">targetScore</span><span class="w">: </span><span class="n">10</span><span class="w">,</span>
<span class="w">      </span><span class="v">totalTime</span><span class="w">: </span><span class="n">10</span><span class="w">,</span>
<span class="w">      </span><span class="v">blockSize</span><span class="w">: </span><span class="n">100</span><span class="w">,</span>
<span class="w">    </span><span class="b">}</span><span class="w">;</span>

<span class="w">    </span><span class="k">this</span><span class="w">.</span><span class="v">blockSize</span><span class="w"> = </span><span class="n">100</span><span class="w">; </span><span class="c">// <span class="z">方块的大小</span></span>
<span class="w">    </span><span class="k">this</span><span class="w">.</span><span class="v">blockX</span><span class="w"> = </span><span class="n">0</span><span class="w">;</span>
<span class="w">    </span><span class="k">this</span><span class="w">.</span><span class="v">blockY</span><span class="w"> = </span><span class="n">0</span><span class="w">; </span><span class="c">// <span class="z">方块的坐标</span></span>

<span class="w">    </span><span class="k">this</span><span class="w">.</span><span class="v">score</span><span class="w"> = </span><span class="n">0</span><span class="w">;</span>
<span class="w">    </span><span class="k">this</span><span class="w">.</span><span class="v">timeLeft</span><span class="w"> = </span><span class="k">this</span><span class="w">.</span><span class="v">config</span><span class="w">.</span><span class="v">totalTime</span><span class="w">;</span>

<span class="w">    </span><span class="c">// <span class="z">初始化方块位置</span></span>
<span class="w">    </span><span class="k">this</span><span class="w">.</span><span class="f">initBlockPosition</span><span class="b">()</span><span class="w">;</span>

<span class="w">    </span><span class="c">// <span class="z">开始游戏循环</span></span>
<span class="w">    </span><span class="k">this</span><span class="w">.</span><span class="f">gameLoop</span><span class="b">()</span><span class="w">;</span>
<span class="w">  </span><span class="m">}</span>

<span class="w">  </span><span class="f">initBlockPosition</span><span class="m">()</span><span class="w"> </span><span class="m">{</span>
<span class="w">    </span><span class="k">this</span><span class="w">.</span><span class="v">blockX</span><span class="w"> = </span><span class="b">(</span><span class="k">this</span><span class="w">.</span><span class="v">canvas</span><span class="w">.</span><span class="v">width</span><span class="w"> - </span><span class="k">this</span><span class="w">.</span><span class="v">config</span><span class="w">.</span><span class="v">blockSize</span><span class="b">)</span><span class="w"> / </span><span class="n">2</span><span class="w">;</span>
<span class="w">    </span><span class="k">this</span><span class="w">.</span><span class="v">blockY</span><span class="w"> = </span><span class="b">(</span><span class="k">this</span><span class="w">.</span><span class="v">canvas</span><span class="w">.</span><span class="v">height</span><span class="w"> - </span><span class="k">this</span><span class="w">.</span><span class="v">config</span><span class="w">.</span><span class="v">blockSize</span><span class="b">)</span><span class="w"> / </span><span class="n">2</span><span class="w">;</span>
<span class="w">  </span><span class="m">}</span>

<span class="w">  </span><span class="f">gameLoop</span><span class="b">(</span><span class="b">)</span><span class="w"> </span><span class="b">{</span>
<span class="w">    </span><span class="k">this</span><span class="w">.</span><span class="f">draw</span><span class="b">(</span><span class="b">)</span><span class="w">;</span>
<span class="w">    </span><span class="f">requestAnimationFrame</span><span class="b">(</span><span class="b">(</span><span class="b">)</span><span class="w"> </span><span class="w">=</span><span class="w">&gt;</span><span class="w"> </span><span class="k">this</span><span class="w">.</span><span class="f">gameLoop</span><span class="b">(</span><span class="b">)</span><span class="b">)</span><span class="w">;</span>
<span class="w">  </span><span class="b">}</span>

<span class="w">  </span><span class="c">// <span class="z">绘制方块</span></span>
<span class="w">  </span><span class="f">drawBlock</span><span class="b">(</span><span class="b">)</span><span class="w"> </span><span class="b">{</span>
<span class="w">    </span><span class="k">this</span><span class="w">.</span><span class="v">ctx</span><span class="w">.</span><span class="v">fillStyle</span><span class="w"> </span><span class="w">=</span><span class="w"> </span><span class="s">&quot;#FF0000&quot;</span><span class="w">;</span>
<span class="w">    </span><span class="k">this</span><span class="w">.</span><span class="v">ctx</span><span class="w">.</span><span class="f">fillRect</span><span class="b">(</span><span class="k">this</span><span class="w">.</span><span class="v">blockX</span><span class="w">,</span><span class="w"> </span><span class="k">this</span><span class="w">.</span><span class="v">blockY</span><span class="w">,</span><span class="w"> </span><span class="k">this</span><span class="w">.</span><span class="v">blockSize</span><span class="w">,</span><span class="w"> </span><span class="k">this</span><span class="w">.</span><span class="v">blockSize</span><span class="b">)</span><span class="w">;</span>
<span class="w">  </span><span class="b">}</span>

<span class="w">  </span><span class="f">draw</span><span class="b">(</span><span class="b">)</span><span class="w"> </span><span class="b">{</span>
<span class="w">    </span><span class="c">// <span class="z">清空画布</span></span>
<span class="w">    </span><span class="k">this</span><span class="w">.</span><span class="v">ctx</span><span class="w">.</span><span class="f">clearRect</span><span class="b">(</span><span class="n">0</span><span class="w">,</span><span class="w"> </span><span class="n">0</span><span class="w">,</span><span class="w"> </span><span class="k">this</span><span class="w">.</span><span class="v">canvas</span><span class="w">.</span><span class="v">width</span><span class="w">,</span><span class="w"> </span><span class="k">this</span><span class="w">.</span><span class="v">canvas</span><span class="w">.</span><span class="v">height</span><span class="b">)</span><span class="w">;</span>

<span class="w">    </span><span class="c">// <span class="z">绘制方块</span></span>
<span class="w">    </span><span class="k">this</span><span class="w">.</span><span class="f">drawBlock</span><span class="b">(</span><span class="b">)</span><span class="w">;</span>

<span class="w">    </span><span class="c">// <span class="z">绘制</span>UI</span>
<span class="w">    </span><span class="k">this</span><span class="w">.</span><span class="f">drawUI</span><span class="b">(</span><span class="b">)</span><span class="w">;</span>
<span class="w">  </span><span class="b">}</span>

<span class="w">  </span><span class="f">drawUI</span><span class="b">(</span><span class="b">)</span><span class="w"> </span><span class="b">{</span>
<span class="w">    </span><span class="c">// <span class="z">绘制分数</span></span>
<span class="w">    </span><span class="k">this</span><span class="w">.</span><span class="v">ctx</span><span class="w">.</span><span class="v">fillStyle</span><span class="w"> </span><span class="w">=</span><span class="w"> </span><span class="s">&quot;#000000&quot;</span><span class="w">;</span>
<span class="w">    </span><span class="k">this</span><span class="w">.</span><span class="v">ctx</span><span class="w">.</span><span class="v">font</span><span class="w"> </span><span class="w">=</span><span class="w"> </span><span class="s">&quot;20px Arial&quot;</span><span class="w">;</span>
<span class="w">    </span><span class="k">this</span><span class="w">.</span><span class="v">ctx</span><span class="w">.</span><span class="v">textAlign</span><span class="w"> </span><span class="w">=</span><span class="w"> </span><span class="s">&quot;left&quot;</span><span class="w">;</span>
<span class="w">    </span><span class="k">this</span><span class="w">.</span><span class="v">ctx</span><span class="w">.</span><span class="f">fillText</span><span class="b">(</span><span class="s">`<span class="z">分数</span>: ${this.score}/${this.config.targetScore}`</span><span class="w">,</span><span class="w"> </span><span class="n">20</span><span class="w">,</span><span class="w"> </span><span class="n">30</span><span class="b">)</span><span class="w">;</span>
<span class="w">  </span><span class="b">}</span>

<span class="w">  </span><span class="f">handleClick</span><span class="b">(</span><span class="v">x</span><span class="w">,</span><span class="w"> </span><span class="v">y</span><span class="b">)</span><span class="w"> </span><span class="b">{</span>
<span class="w">    </span><span class="c">// <span class="z">检查点击</span></span>
<span class="w">    </span><span class="m">if</span><span class="w"> </span><span class="b">(</span><span class="k">this</span><span class="w">.</span><span class="f">isBlockClicked</span><span class="b">(</span><span class="v">x</span><span class="w">,</span><span class="w"> </span><span class="v">y</span><span class="b">)</span><span class="b">)</span><span class="w"> </span><span class="b">{</span>
<span class="w">      </span><span class="k">this</span><span class="w">.</span><span class="v">score</span><span class="w">+</span><span class="w">+</span><span class="w">;</span>

<span class="w">      </span><span class="c">// <span class="z">移动方块到新的随机位置</span></span>
<span class="w">      </span><span class="k">this</span><span class="w">.</span><span class="f">moveBlockRandomly</span><span class="b">(</span><span class="b">)</span><span class="w">;</span>
<span class="w">    </span><span class="b">}</span>
<span class="w">  </span><span class="b">}</span>

<span class="w">  </span><span class="f">isBlockClicked</span><span class="b">(</span><span class="v">x</span><span class="w">,</span><span class="w"> </span><span class="v">y</span><span class="b">)</span><span class="w"> </span><span class="b">{</span>
<span class="w">    </span><span class="k">return</span><span class="w"> </span><span class="b">(</span>
<span class="w">      </span><span class="v">x</span><span class="w"> </span><span class="w">&gt;</span><span class="w"> </span><span class="k">this</span><span class="w">.</span><span class="v">blockX</span><span class="w"> </span><span class="w">&amp;</span><span class="w">&amp;</span>
<span class="w">      </span><span class="v">x</span><span class="w"> </span><span class="w">&lt;</span><span class="w"> </span><span class="k">this</span><span class="w">.</span><span class="v">blockX</span><span class="w"> </span><span class="w">+</span><span class="w"> </span><span class="k">this</span><span class="w">.</span><span class="v">config</span><span class="w">.</span><span class="v">blockSize</span><span class="w"> </span><span class="w">&amp;</span><span class="w">&amp;</span>
<span class="w">      </span><span class="v">y</span><span class="w"> </span><span class="w">&gt;</span><span class="w"> </span><span class="k">this</span><span class="w">.</span><span class="v">blockY</span><span class="w"> </span><span class="w">&amp;</span><span class="w">&amp;</span>
<span class="w">      </span><span class="v">y</span><span class="w"> </span><span class="w">&lt;</span><span class="w"> </span><span class="k">this</span><span class="w">.</span><span class="v">blockY</span><span class="w"> </span><span class="w">+</span><span class="w"> </span><span class="k">this</span><span class="w">.</span><span class="v">config</span><span class="w">.</span><span class="v">blockSize</span>
<span class="w">    </span><span class="b">)</span><span class="w">;</span>
<span class="w">  </span><span class="b">}</span>

<span class="w">  </span><span class="f">moveBlockRandomly</span><span class="b">(</span><span class="b">)</span><span class="w"> </span><span class="b">{</span>
<span class="w">    </span><span class="k">this</span><span class="w">.</span><span class="v">blockX</span><span class="w"> </span><span class="w">=</span><span class="w"> </span><span class="v">Math</span><span class="w">.</span><span class="f">random</span><span class="b">(</span><span class="b">)</span><span class="w"> </span><span class="w">*</span><span class="w"> </span><span class="b">(</span><span class="k">this</span><span class="w">.</span><span class="v">canvas</span><span class="w">.</span><span class="v">width</span><span class="w"> </span><span class="w">-</span><span class="w"> </span><span class="k">this</span><span class="w">.</span><span class="v">config</span><span class="w">.</span><span class="v">blockSize</span><span class="b">)</span><span class="w">;</span>
<span class="w">    </span><span class="k">this</span><span class="w">.</span><span class="v">blockY</span><span class="w"> </span><span class="w">=</span><span class="w"> </span><span class="n">100</span><span class="w"> </span><span class="w">+</span><span class="w"> </span><span class="v">Math</span><span class="w">.</span><span class="f">random</span><span class="b">(</span><span class="b">)</span><span class="w"> </span><span class="w">*</span><span class="w"> </span><span class="b">(</span><span class="k">this</span><span class="w">.</span><span class="v">canvas</span><span class="w">.</span><span class="v">height</span><span class="w"> </span><span class="w">-</span><span class="w"> </span><span class="n">200</span><span class="b">)</span><span class="w">;</span>
<span class="w">  </span><span class="b">}</span>
<span class="w"></span><span class="b">}</span>

<span class="w"></span><span class="c">// <span class="z">创建游戏实例</span></span>
<span class="w"></span><span class="k">const</span><span class="w"> </span><span class="v">game</span><span class="w"> </span><span class="w">=</span><span class="w"> </span><span class="k">new</span><span class="w"> </span><span class="f">ClickGame</span><span class="b">(</span><span class="b">)</span><span class="w">;</span>

<span class="w"></span><span class="c">// <span class="z">触摸事件处理</span></span>
<span class="w"></span><span class="v">tt</span><span class="w">.</span><span class="f">onTouchStart</span><span class="b">(</span><span class="b">(</span><span class="v">e</span><span class="b">)</span><span class="w"> </span><span class="w">=</span><span class="w">&gt;</span><span class="w"> </span><span class="b">{</span>
<span class="w">  </span><span class="k">const</span><span class="w"> </span><span class="v">touch</span><span class="w"> </span><span class="w">=</span><span class="w"> </span><span class="v">e</span><span class="w">.</span><span class="v">touches</span><span class="w">[</span><span class="n">0</span><span class="w">]</span><span class="w">;</span>
<span class="w">  </span><span class="v">game</span><span class="w">.</span><span class="f">handleClick</span><span class="b">(</span><span class="v">touch</span><span class="w">.</span><span class="v">clientX</span><span class="w">,</span><span class="w"> </span><span class="v">touch</span><span class="w">.</span><span class="v">clientY</span><span class="b">)</span><span class="w">;</span>
<span class="w"></span><span class="b">}</span><span class="b">)</span><span class="w">;</span></div><!-- find widget -->
<div class="a" style="left:2170px;top:286px;width:838px;height:65px;background:#252526;border-radius:0 0 8px 8px;box-shadow:0 2px 8px rgba(0,0,0,.5)"></div>
<div class="a" style="left:2170px;top:286px;width:4px;height:65px;background:#3a3a3a;border-radius:0 0 0 6px"></div>
<svg style="left:2189px;top:310px" width="12" height="20" viewBox="0 0 12 20"><polyline class="ic" style="stroke:#c5c5c5" points="2,2 10,10 2,18"/></svg>
<div class="a" style="left:2212px;top:292px;width:366px;height:50px;background:#3b3b3b;border-radius:4px"></div>
<div class="a" style="left:2226px;top:302px;font-size:26px;line-height:32px;color:#d0d0d0;font-weight:bold">wx.</div>
<div class="a" style="left:2453px;top:304px;font-size:22px;line-height:28px;color:#c5c5c5">Aa</div>
<div class="a" style="left:2497px;top:302px;font-size:22px;line-height:28px;color:#c5c5c5">ab</div>
<svg style="left:2494px;top:326px" width="34" height="8" viewBox="0 0 34 8"><polyline points="1,1 1,6 33,6 33,1" fill="none" stroke="#c5c5c5" stroke-width="2"/></svg>
<div class="a" style="left:2542px;top:323px;width:9px;height:9px;background:#c5c5c5"></div>
<div class="a" style="left:2549px;top:299px;font-size:38px;line-height:36px;color:#c5c5c5">*</div>
<div class="a" style="left:2588px;top:302px;font-size:25px;line-height:32px;color:#f48771;white-space:nowrap"><span class="z">无结果</span></div>
<svg style="left:2819px;top:304px" width="24" height="26" viewBox="0 0 24 26"><path d="M12 25 V2 M2 12 L12 2 L22 12" stroke="#7a7a7a" stroke-width="2" fill="none"/></svg>
<svg style="left:2869px;top:304px" width="24" height="26" viewBox="0 0 24 26"><path d="M12 1 V24 M2 14 L12 24 L22 14" stroke="#7a7a7a" stroke-width="2" fill="none"/></svg>
<svg style="left:2915px;top:307px" width="30" height="20" viewBox="0 0 30 20"><path d="M1 2 H25 M1 10 H29 M1 18 H21" stroke="#c5c5c5" stroke-width="2.2" fill="none"/></svg>
<svg style="left:2968px;top:308px" width="20" height="20" viewBox="0 0 20 20"><path d="M1 1 L19 19 M19 1 L1 19" stroke="#c5c5c5" stroke-width="2.4" fill="none"/></svg>

<!-- minimap scrollbar -->
<div class="a" style="left:3264px;top:286px;width:1px;height:1304px;background:#2c2c2c"></div>
<div class="a" style="left:3265px;top:446px;width:27px;height:4px;background:#5a5a5a"></div>
</div>


<!-- ===== bottom panel ===== -->
<div class="a" style="left:1376px;top:1590px;width:1916px;height:2px;background:#383838"></div>
<div class="a" style="left:1376px;top:1592px;width:1916px;height:68px;background:#1c1c1c"></div>
<div class="a" style="left:1376px;top:1660px;width:1916px;height:52px;background:#292a2d"></div>
<div class="a" style="left:1376px;top:1712px;width:1916px;height:2px;background:#3c3c3c"></div>
<div class="a" style="left:1376px;top:1714px;width:1916px;height:400px;background:#202124"></div>
<!-- panel tabs -->
<div class="a" style="left:1417px;top:1610px;font-size:24px;line-height:34px;color:#e8e8e8;white-space:nowrap"><span class="z">调试器</span></div>
<div class="a" style="left:1412px;top:1651px;width:74px;height:3px;background:#3794ff"></div>
<div class="a" style="left:1530px;top:1610px;font-size:24px;line-height:34px;color:#9d9d9d;white-space:nowrap"><span class="z">抖音云</span></div>
<div class="a" style="left:1644px;top:1610px;font-size:24px;line-height:34px;color:#9d9d9d;white-space:nowrap"><span class="z">搜索</span></div>
<div class="a" style="left:1737px;top:1610px;font-size:24px;line-height:34px;color:#9d9d9d;white-space:nowrap"><span class="z">问题</span></div>
<div class="a" style="left:1800px;top:1609px;width:36px;height:36px;border-radius:18px;background:#4d4d4d;color:#fff;font-size:22px;line-height:36px;text-align:center">8</div>
<div class="a" style="left:1880px;top:1610px;font-size:24px;line-height:34px;color:#9d9d9d;white-space:nowrap"><span class="z">终端</span></div>
<div class="a" style="left:1972px;top:1610px;font-size:24px;line-height:34px;color:#9d9d9d;white-space:nowrap">AZURE</div>
<svg style="left:3183px;top:1619px" width="22" height="14" viewBox="0 0 22 14"><polyline points="1,12 11,2 21,12" fill="none" stroke="#d0d0d0" stroke-width="2"/></svg>
<svg style="left:3236px;top:1616px" width="20" height="20" viewBox="0 0 20 20"><path d="M1 1 L19 19 M19 1 L1 19" stroke="#d0d0d0" stroke-width="2.2"/></svg>

<!-- devtools tabs -->
<div class="a" style="left:1376px;top:1660px;width:136px;height:52px;background:#000"></div>
<div class="a" style="left:1399px;top:1668px;font-size:25px;line-height:36px;color:#fff;white-space:nowrap">Console</div>
<div class="a" style="left:1535px;top:1668px;font-size:25px;line-height:36px;color:#9aa0a6;white-space:nowrap">Sources</div>
<div class="a" style="left:1671px;top:1668px;font-size:25px;line-height:36px;color:#9aa0a6;white-space:nowrap">Network</div>
<div class="a" style="left:1809px;top:1668px;font-size:25px;line-height:36px;color:#9aa0a6;white-space:nowrap">Profiles</div>
<div class="a" style="left:1935px;top:1668px;font-size:25px;line-height:36px;color:#9aa0a6;white-space:nowrap">Storage</div>
<div class="a" style="left:2067px;top:1668px;font-size:25px;line-height:36px;color:#9aa0a6;white-space:nowrap">Mock</div>
<div class="a" style="left:2175px;top:1668px;font-size:25px;line-height:36px;color:#9aa0a6;white-space:nowrap">Sensors</div>
<div class="a" style="left:3110px;top:1670px;width:1px;height:32px;background:#3c3c3c"></div>
<svg style="left:3137px;top:1672px" width="26" height="28" viewBox="0 0 26 28"><path d="M13 1.5 L23.5 7.5 V20.5 L13 26.5 L2.5 20.5 V7.5 Z" fill="none" stroke="#9aa0a6" stroke-width="2"/><circle cx="13" cy="14" r="3.5" fill="none" stroke="#9aa0a6" stroke-width="2"/></svg>
<div class="a" style="left:3202px;top:1675px;width:6px;height:6px;border-radius:50%;background:#9aa0a6"></div>
<div class="a" style="left:3202px;top:1686px;width:6px;height:6px;border-radius:50%;background:#9aa0a6"></div>
<div class="a" style="left:3202px;top:1697px;width:6px;height:6px;border-radius:50%;background:#9aa0a6"></div>
<div class="a" style="left:3248px;top:1682px;width:22px;height:22px;border-radius:3px;background:#4a4a4a"></div>
<div class="a" style="left:3252px;top:1676px;width:24px;height:22px;border:2.5px solid #b0b0b0;border-radius:3px;background:#292a2d"></div>

<!-- console toolbar -->
<svg style="left:1392px;top:1726px" width="30" height="28" viewBox="0 0 30 28"><rect x="1" y="1" width="28" height="26" fill="none" stroke="#9aa0a6" stroke-width="2"/><line x1="9" y1="1" x2="9" y2="27" stroke="#9aa0a6" stroke-width="2"/><path d="M14 8 L22 14 L14 20 Z" fill="#9aa0a6"/></svg>
<svg style="left:1451px;top:1727px" width="28" height="28" viewBox="0 0 28 28"><circle cx="14" cy="14" r="11.5" fill="none" stroke="#9aa0a6" stroke-width="3"/><line x1="6" y1="6" x2="22" y2="22" stroke="#9aa0a6" stroke-width="3"/></svg>
<div class="a" style="left:1500px;top:1722px;width:1px;height:36px;background:#3c3c3c"></div>
<div class="a" style="left:1520px;top:1723px;font-size:25px;line-height:36px;color:#c0c0c0;white-space:nowrap">miniapp-service (bl…</div>
<svg style="left:1762px;top:1734px" width="14" height="12" viewBox="0 0 14 12"><path d="M1 1 H13 L7 11 Z" fill="#c0c0c0"/></svg>
<div class="a" style="left:1795px;top:1722px;width:1px;height:36px;background:#3c3c3c"></div>
<svg style="left:1816px;top:1729px" width="32" height="22" viewBox="0 0 32 22"><path d="M1 11 Q16 -6 31 11 Q16 28 1 11 Z" fill="#9aa0a6"/><circle cx="16" cy="11" r="5" fill="#292a2d"/><circle cx="16" cy="11" r="2.5" fill="#9aa0a6"/></svg>
<div class="a" style="left:1869px;top:1722px;width:1px;height:36px;background:#3c3c3c"></div>
<div class="a" style="left:1882px;top:1719px;width:394px;height:42px;border:2px solid #5f6368;background:#202124"></div>
<div class="a" style="left:1891px;top:1723px;font-size:25px;line-height:36px;color:#9aa0a6">Filter</div>
<div class="a" style="left:2292px;top:1723px;font-size:25px;line-height:36px;color:#c0c0c0;white-space:nowrap">Default levels</div>
<svg style="left:2445px;top:1734px" width="14" height="12" viewBox="0 0 14 12"><path d="M1 1 H13 L7 11 Z" fill="#c0c0c0"/></svg>
<div class="a" style="left:2480px;top:1722px;width:1px;height:36px;background:#3c3c3c"></div>
<div class="a" style="left:3110px;top:1724px;width:1px;height:32px;background:#3c3c3c"></div>
<div class="a" style="left:3128px;top:1723px;font-size:25px;line-height:36px;color:#80868b;white-space:nowrap">2 hidden</div>
<svg style="left:3249px;top:1726px" width="26" height="28" viewBox="0 0 26 28"><path d="M13 1.5 L23.5 7.5 V20.5 L13 26.5 L2.5 20.5 V7.5 Z" fill="none" stroke="#9aa0a6" stroke-width="2"/><circle cx="13" cy="14" r="3.5" fill="none" stroke="#9aa0a6" stroke-width="2"/></svg>
<div class="a" style="left:1376px;top:1766px;width:1916px;height:2px;background:#4a4a4a"></div>

<!-- console messages -->
<div class="a mono" style="left:1426px;top:1776px;font-size:22px;line-height:28px;color:#d5d5d5;white-space:pre">[TMG] use engine:  helium</div>
<div class="a mono" style="left:3063px;top:1777px;font-size:22px;line-height:28px;color:#d5d5d5;white-space:pre;text-decoration:underline">tmg-core.js:2</div>
<div class="a" style="left:1376px;top:1804px;width:1916px;height:1px;background:#3a3a3a"></div>
<svg style="left:1395px;top:1818px" width="12" height="18" viewBox="0 0 12 18"><polyline points="2,2 9,9 2,16" fill="none" stroke="#4a8af4" stroke-width="2.6"/></svg>


<!-- ===== status bar ===== -->
<div class="a" style="left:800px;top:2114px;width:2492px;height:44px;background:#222222"></div>
<div class="a" style="left:888px;top:2027px;width:488px;height:87px;background:#292929"></div>
<div class="a" style="left:888px;top:2026px;width:488px;height:2px;background:#383838"></div>
<div class="a" style="left:888px;top:2070px;width:488px;height:2px;background:#383838"></div>
<svg style="left:903px;top:2038px" width="12" height="20" viewBox="0 0 12 20"><polyline class="ic" style="stroke:#c8c8c8" points="2,2 10,10 2,18"/></svg>
<div class="a" style="left:927px;top:2032px;font-size:23px;line-height:34px;color:#d8d8d8;font-weight:bold"><span class="z">大纲</span></div>
<svg style="left:903px;top:2082px" width="12" height="20" viewBox="0 0 12 20"><polyline class="ic" style="stroke:#c8c8c8" points="2,2 10,10 2,18"/></svg>
<div class="a" style="left:927px;top:2076px;font-size:23px;line-height:34px;color:#d8d8d8;font-weight:bold"><span class="z">时间线</span></div>

<svg style="left:830px;top:2123px" width="56" height="26" viewBox="0 0 56 26"><path class="ic" d="M2 24 L6 20 M5 15 Q14 2 25 1 Q24 12 11 21 Z M4 15 H10 M11 21 V16 M16 9 A2 2 0 1 0 16.1 9" style="stroke-width:1.8"/><path class="ic" d="M32 24 L36 20 M35 21 Q33 15 39 11 L44 16 Q40 22 35 21 M41 10 L47 4 M45 13 L51 7 M48 2 L54 8" style="stroke-width:1.8"/></svg>
<div class="a" style="left:893px;top:2119px;font-size:24px;line-height:34px;color:#9a9a9a">Launchpad</div>
<svg style="left:1051px;top:2124px" width="24" height="24" viewBox="0 0 24 24"><circle class="ic" style="stroke:#9a9a9a" cx="12" cy="12" r="11"/><path class="ic" style="stroke:#9a9a9a" d="M7.5 7.5 L16.5 16.5 M16.5 7.5 L7.5 16.5"/></svg>
<div class="a" style="left:1086px;top:2119px;font-size:24px;line-height:34px;color:#9a9a9a">0</div>
<svg style="left:1108px;top:2123px" width="26" height="24" viewBox="0 0 26 24"><path class="ic" style="stroke:#9a9a9a" d="M13 1.5 L25 22.5 H1 Z M13 9 V15 M13 18 V19"/></svg>
<div class="a" style="left:1143px;top:2119px;font-size:24px;line-height:34px;color:#9a9a9a">1</div>
<svg style="left:1164px;top:2124px" width="24" height="24" viewBox="0 0 24 24"><circle class="ic" style="stroke:#9a9a9a" cx="12" cy="12" r="11"/><path class="ic" style="stroke:#9a9a9a" d="M12 10 V18 M12 6 V6.5"/></svg>
<div class="a" style="left:1199px;top:2119px;font-size:24px;line-height:34px;color:#9a9a9a">7</div>
<svg style="left:1247px;top:2124px" width="24" height="24" viewBox="0 0 24 24"><circle class="ic" style="stroke:#9a9a9a" cx="12" cy="12" r="11"/><ellipse class="ic" style="stroke:#9a9a9a" cx="12" cy="12" rx="5" ry="11"/><path class="ic" style="stroke:#9a9a9a" d="M1 12 H23 M3 6 H21 M3 18 H21"/></svg>
<div class="a" style="left:1281px;top:2119px;font-size:24px;line-height:34px;color:#9a9a9a">English</div>

<div class="a" style="left:2035px;top:2119px;font-size:24px;line-height:34px;color:#9a9a9a;white-space:pre"><span class="z">行</span> 16<span class="z">，列</span> 34</div>
<div class="a" style="left:2214px;top:2119px;font-size:24px;line-height:34px;color:#9a9a9a;white-space:pre"><span class="z">空格</span>: 2</div>
<div class="a" style="left:2322px;top:2119px;font-size:24px;line-height:34px;color:#9a9a9a;white-space:pre">UTF-8</div>
<div class="a" style="left:2427px;top:2119px;font-size:24px;line-height:34px;color:#9a9a9a;white-space:pre">LF</div>
<div class="a" style="left:2485px;top:2119px;font-size:22px;line-height:34px;color:#9a9a9a;white-space:pre">{ }</div>
<div class="a" style="left:2522px;top:2119px;font-size:24px;line-height:34px;color:#9a9a9a;white-space:pre">JavaScript</div>
<div class="a" style="left:2668px;top:2119px;font-size:24px;line-height:34px;color:#9a9a9a;white-space:pre">AppWorks</div>
<svg style="left:2815px;top:2124px" width="24" height="24" viewBox="0 0 24 24"><path class="ic" style="stroke:#9a9a9a" d="M3.5 8 A10 10 0 1 1 2 12 M1 4 V8.5 H5.5 M12 6 V12 L16 15"/></svg>
<div class="a" style="left:2848px;top:2119px;font-size:24px;line-height:34px;color:#9a9a9a;white-space:pre">52 min</div>
<svg style="left:2964px;top:2127px" width="22" height="18" viewBox="0 0 22 18"><polyline class="ic" style="stroke:#9a9a9a" points="1,9 7,16 21,1"/></svg>
<div class="a" style="left:2995px;top:2119px;font-size:24px;line-height:34px;color:#9a9a9a;white-space:pre">Spell</div>
<svg style="left:3087px;top:2127px" width="22" height="18" viewBox="0 0 22 18"><polyline class="ic" style="stroke:#9a9a9a" points="1,9 7,16 21,1"/></svg>
<div class="a" style="left:3118px;top:2119px;font-size:24px;line-height:34px;color:#9a9a9a;white-space:pre">Prettier</div>
<svg style="left:3234px;top:2122px" width="22" height="26" viewBox="0 0 22 26"><path class="ic" style="stroke:#9a9a9a" d="M4 19 V11 Q4 3 11 3 Q18 3 18 11 V19 L20 21 H2 Z M8 23 Q11 26 14 23"/></svg>


<!-- ===== popup ===== -->
<div class="a" style="left:740px;top:159px;width:560px;height:813px;background:#222222;border-radius:14px"></div>
<div class="a" style="left:850px;top:222px;font-size:29px;line-height:36px;color:#8d8d8d;white-space:nowrap"><span class="z">推送预览</span></div>
<div class="a" style="left:1019px;top:230px;width:2px;height:26px;background:#777"></div>
<div class="a" style="left:1073px;top:222px;font-size:29px;line-height:36px;color:#ffffff;white-space:nowrap"><span class="z">扫码预览</span></div>
<div class="a" style="left:1054px;top:194px;width:156px;height:72px;border:7.5px solid #f44b48;border-radius:15px;z-index:10"></div>
<!-- QR -->
<div class="a" style="left:880px;top:292px;width:280px;height:280px;background:#fff"></div>
<svg style="left:902px;top:304px" width="242" height="256" viewBox="0 0 242 256" shape-rendering="crispEdges">
<rect x="0" y="0" width="242" height="256" fill="#bdbdbd"/>
<rect x="7" y="0" width="61" height="61" fill="#d2d2d2"/><rect x="68" y="0" width="60" height="61" fill="#d8d8d8"/><rect x="128" y="0" width="60" height="61" fill="#cacaca"/><rect x="188" y="0" width="54" height="61" fill="#d3d3d3"/>
<rect x="7" y="61" width="61" height="61" fill="#cacaca"/><rect x="68" y="61" width="60" height="61" fill="#bebebe"/><rect x="128" y="61" width="60" height="61" fill="#bebebe"/><rect x="188" y="61" width="54" height="61" fill="#c4c4c4"/>
<rect x="7" y="122" width="61" height="61" fill="#cdcdcd"/><rect x="68" y="122" width="60" height="61" fill="#aeaeae"/><rect x="128" y="122" width="60" height="61" fill="#acacac"/><rect x="188" y="122" width="54" height="61" fill="#d0d0d0"/>
<rect x="7" y="183" width="61" height="61" fill="#b6b6b6"/><rect x="68" y="183" width="60" height="61" fill="#bcbcbc"/><rect x="128" y="183" width="60" height="61" fill="#acacac"/><rect x="188" y="183" width="54" height="61" fill="#d5d5d5"/>
<rect x="0" y="0" width="7" height="256" fill="#8e8e8e"/><rect x="0" y="244" width="7" height="12" fill="#6e6e6e"/>
</svg>
<div class="a" style="left:856px;top:274px;width:332px;height:316px;border:8px solid #f44b48;border-radius:11px;z-index:10"></div>
<div class="a" style="left:887px;top:590px;font-size:21px;line-height:28px;color:#9a9a9a;white-space:nowrap"><span class="z">过期时间：</span><span style="font-size:22.5px;letter-spacing:0.3px">11-21 15:53:26</span></div>
<div class="a" style="left:844px;top:644px;width:168px;height:40px;border-radius:7px;background:#383838;text-align:center;font-size:23px;line-height:40px;color:#d0d0d0"><span class="z">复制二维码</span></div>
<div class="a" style="left:1028px;top:644px;width:168px;height:40px;border-radius:7px;background:#383838;text-align:center;font-size:23px;line-height:40px;color:#d0d0d0"><span class="z">复制链接</span></div>
<div class="a" style="left:848px;top:726px;width:8px;height:8px;border-radius:50%;background:#c8c8c8"></div>
<div class="a" style="left:871px;top:714px;font-size:23px;line-height:32px;color:#c8c8c8;white-space:nowrap"><span class="z">请使用抖音</span> 35.0.0 <span class="z">及以上版本</span></div>
<div class="a" style="left:848px;top:771px;width:8px;height:8px;border-radius:50%;background:#c8c8c8"></div>
<div class="a" style="left:871px;top:759px;font-size:23px;line-height:32px;color:#c8c8c8;white-space:nowrap"><span class="z">使用</span> ⇧⌘P <span class="z">可打开预览面板</span></div>
<div class="a" style="left:880px;top:864px;width:31px;height:31px;border:2px solid #6a6a6a;border-radius:4px"></div>
<div class="a" style="left:927px;top:862px;font-size:27px;line-height:36px;color:#c8c8c8;white-space:nowrap"><span class="z">局域网快速预览</span></div>
<svg style="left:1134px;top:867px" width="26" height="26" viewBox="0 0 26 26"><circle cx="13" cy="13" r="11.5" fill="none" stroke="#9a9a9a" stroke-width="2"/><path d="M9.5 10 Q9.5 6.5 13 6.5 Q16.5 6.5 16.5 9.5 Q16.5 12 13 13.5 V15.5" fill="none" stroke="#9a9a9a" stroke-width="2"/><circle cx="13" cy="19" r="1.3" fill="#9a9a9a"/></svg>


</div>
<div class="a" style="left:0;top:0;width:3292px;height:2158px;border-radius:20px;border:1px solid #4a4a4a;border-top:2px solid #a8a8a8;pointer-events:none;z-index:20"></div>
</body></html>
